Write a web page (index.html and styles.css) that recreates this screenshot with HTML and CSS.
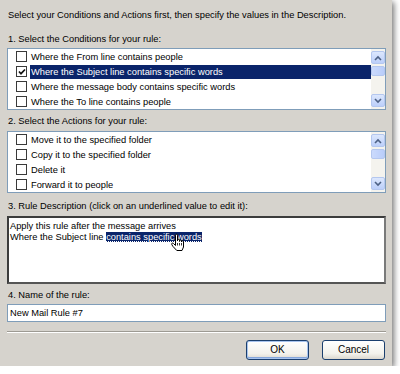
FILE: index.html
```html
<!DOCTYPE html>
<html>
<head>
<meta charset="utf-8">
<link rel="stylesheet" href="styles.css">
</head>
<body>
<div class="dialog">
  <div class="intro">Select your Conditions and Actions first, then specify the values in the Description.</div>

  <div class="label l1">1. Select the Conditions for your rule:</div>
  <div class="list">
    <div class="rows">
      <div class="row"><span class="cb"></span><span class="txt">Where the From line contains people</span></div>
      <div class="row"><span class="cb checked"><svg viewBox="0 0 8 8" width="8" height="8"><path d="M1 3.5 L3 5.7 L7 1.5" fill="none" stroke="#111" stroke-width="1.7"/></svg></span><span class="txt sel">Where the Subject line contains specific words</span></div>
      <div class="row"><span class="cb"></span><span class="txt">Where the message body contains specific words</span></div>
      <div class="row"><span class="cb"></span><span class="txt">Where the To line contains people</span></div>
    </div>
    <div class="sbar">
      <div class="sbtn"><svg viewBox="0 0 8 6" width="8" height="6"><path d="M1 5 L4 2 L7 5" fill="none" stroke="#4d6185" stroke-width="1.6"/></svg></div>
      <div class="thumb"></div>
      <div class="track"></div>
      <div class="sbtn"><svg viewBox="0 0 8 6" width="8" height="6"><path d="M1 1 L4 4 L7 1" fill="none" stroke="#4d6185" stroke-width="1.6"/></svg></div>
    </div>
  </div>

  <div class="label l2">2. Select the Actions for your rule:</div>
  <div class="list">
    <div class="rows">
      <div class="row"><span class="cb"></span><span class="txt">Move it to the specified folder</span></div>
      <div class="row"><span class="cb"></span><span class="txt">Copy it to the specified folder</span></div>
      <div class="row"><span class="cb"></span><span class="txt">Delete it</span></div>
      <div class="row"><span class="cb"></span><span class="txt">Forward it to people</span></div>
    </div>
    <div class="sbar">
      <div class="sbtn"><svg viewBox="0 0 8 6" width="8" height="6"><path d="M1 5 L4 2 L7 5" fill="none" stroke="#4d6185" stroke-width="1.6"/></svg></div>
      <div class="thumb"></div>
      <div class="track"></div>
      <div class="sbtn"><svg viewBox="0 0 8 6" width="8" height="6"><path d="M1 1 L4 4 L7 1" fill="none" stroke="#4d6185" stroke-width="1.6"/></svg></div>
    </div>
  </div>

  <div class="label l3">3. Rule Description (click on an underlined value to edit it):</div>
  <div class="desc">
    <div class="dline">Apply this rule after the message arrives</div>
    <div class="dline">Where the Subject line <span class="hl">contains specific words</span></div>
    <svg class="hand" viewBox="0 0 16 20" width="16" height="20">
      <path d="M5.5 11 V2.2 a1 1 0 0 1 2 0 V8 V7.3 a1 1 0 0 1 2 0 V8.5 V8 a1 1 0 0 1 2 0 V9 V8.8 a1 1 0 0 1 2 0 V14 l-1.5 3.5 H6.8 L3 13.5 L1.8 11.6 a1 1 0 0 1 1.7 -1.1 L5.5 12.5 Z" fill="#fff" stroke="#000" stroke-width="1"/>
      <path d="M7.5 10 V12.5 M9.5 10 V12.5 M11.5 10 V12.5" stroke="#000" stroke-width="0.8"/>
    </svg>
  </div>

  <div class="label l4">4. Name of the rule:</div>
  <div class="input">New Mail Rule #7</div>

  <div class="sep"></div>

  <div class="buttons">
    <div class="btn default">OK</div>
    <div class="btn">Cancel</div>
  </div>
</div>
</body>
</html>
```

FILE: styles.css
```css
html, body {
  margin: 0;
  padding: 0;
  background: #ffffff;
}
body {
  font-family: "Liberation Sans", Arial, sans-serif;
  font-size: 9.3px;
  color: #000;
}
.dialog {
  position: relative;
  width: 392px;
  height: 366px;
  box-sizing: border-box;
  padding: 10px 6px 0 7px;
  background: #d6d3cd;
  box-shadow: 2px 2px 6px rgba(0, 0, 0, 0.55);
  display: flex;
  flex-direction: column;
}
.intro {
  line-height: 11px;
  height: 11px;
  padding-left: 1px;
  white-space: nowrap;
}
.label {
  line-height: 11px;
  height: 11px;
  padding-left: 1px;
  white-space: nowrap;
}
.l1 { margin-top: 13px; margin-bottom: 3px; }
.l2 { margin-top: 6px; margin-bottom: 4px; }
.l3 { margin-top: 8px; margin-bottom: 4px; }
.l4 { margin-top: 6px; margin-bottom: 3px; }

.list {
  height: 62px;
  box-sizing: border-box;
  border: 1px solid #7f9db9;
  background: #fff;
  display: flex;
}
.rows {
  flex: 1;
  display: flex;
  flex-direction: column;
}
.row {
  height: 15px;
  display: flex;
  align-items: center;
}
.cb {
  width: 9px;
  height: 9px;
  border: 1px solid #3a3a3a;
  background: #fff;
  margin-left: 8px;
  margin-right: 3px;
  display: flex;
  align-items: center;
  justify-content: center;
  flex: none;
}
.txt {
  line-height: 14px;
  height: 14px;
  padding: 0 1px;
  white-space: nowrap;
}
.txt.sel {
  flex: 1;
  background: #0a246a;
  color: #fff;
}
.sbar {
  width: 14px;
  flex: none;
  background: #f4f3ee;
  display: flex;
  flex-direction: column;
  padding: 1px 0;
  box-sizing: border-box;
}
.sbtn {
  height: 13px;
  margin: 1px 0;
  border: 1px solid #b4c7ef;
  border-radius: 2px;
  background: linear-gradient(#dce7fd, #bccffa);
  display: flex;
  align-items: center;
  justify-content: center;
  box-sizing: border-box;
}
.thumb {
  height: 10px;
  margin-top: 1px;
  border: 1px solid #b4c7ef;
  border-radius: 2px;
  background: linear-gradient(90deg, #cbdafc, #b9cdfa);
  box-sizing: border-box;
}
.track { flex: 1; }

.desc {
  position: relative;
  height: 68px;
  box-sizing: border-box;
  border-style: solid;
  border-width: 2px;
  border-color: #3c3c3c #7a7a7a #555 #3c3c3c;
  background: #fff;
  padding: 3px 1px 0;
}
.dline {
  line-height: 11px;
  height: 11px;
  white-space: nowrap;
}
.hl {
  background: #0a246a;
  color: #fff;
  text-decoration: underline dotted;
}
.hand {
  position: absolute;
  left: 161px;
  top: 15px;
}

.input {
  height: 18px;
  box-sizing: border-box;
  border: 1px solid #7f9db9;
  background: #fff;
  padding-left: 2px;
  line-height: 16px;
}

.sep {
  margin-top: 9px;
  border-top: 1px solid #9d9a93;
  border-bottom: 1px solid #fff;
  height: 0;
}

.buttons {
  margin-top: 7px;
  display: flex;
  justify-content: flex-end;
  gap: 13px;
  padding-right: 1px;
}
.btn {
  width: 63px;
  height: 20px;
  box-sizing: border-box;
  border: 1px solid #1b3f6e;
  border-radius: 3px;
  background: linear-gradient(#ffffff, #f3f2ec 70%, #dcd8cf);
  text-align: center;
  line-height: 18px;
  font-size: 10px;
}
.btn.default {
  box-shadow: inset 0 0 0 1px #a8c4ee, inset 0 -1px 0 1px #86a7dc;
}
```
